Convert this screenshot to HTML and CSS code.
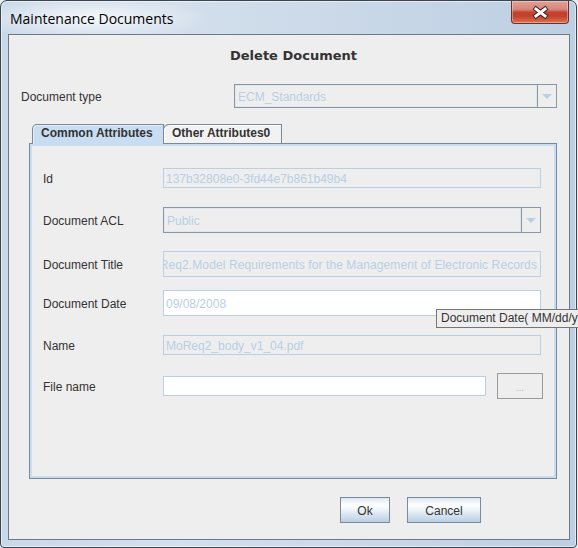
FILE: index.html
```html
<!DOCTYPE html>
<html>
<head>
<meta charset="utf-8">
<title>Maintenance Documents</title>
<link rel="stylesheet" href="styles.css">
</head>
<body>
<div class="window">
  <div class="titlebar">
    <span class="title">Maintenance Documents</span>
    <div class="close">
      <svg width="57" height="23" viewBox="0 0 57 23">
        <path d="M22 6.5 L35 16.5 M35 6.5 L22 16.5" stroke="#4b2b28" stroke-width="5" fill="none"/>
        <path d="M22.8 7.2 L34.2 15.8 M34.2 7.2 L22.8 15.8" stroke="#ffffff" stroke-width="2.8" fill="none"/>
      </svg>
    </div>
  </div>
  <div class="client">
    <h1 class="heading">Delete Document</h1>
    <div class="type-row">
      <span class="label">Document type</span>
      <div class="combo">
        <span class="combo-text">ECM_Standards</span>
        <span class="combo-arrow"><svg width="10" height="5" viewBox="0 0 10 5"><path d="M0 0 H10 L5 5 Z" fill="#b8cfe5"/></svg></span>
      </div>
    </div>
    <div class="tabs">
      <div class="tab-strip">
        <div class="tab tab-selected">Common Attributes</div>
        <div class="tab tab-other">Other Attributes0</div>
      </div>
      <div class="tab-panel">
        <div class="form-row">
          <span class="label">Id</span>
          <div class="field">137b32808e0-3fd44e7b861b49b4</div>
        </div>
        <div class="form-row gap-19">
          <span class="label">Document ACL</span>
          <div class="combo combo-tall">
            <span class="combo-text">Public</span>
            <span class="combo-arrow"><svg width="10" height="5" viewBox="0 0 10 5"><path d="M0 0 H10 L5 5 Z" fill="#b8cfe5"/></svg></span>
          </div>
        </div>
        <div class="form-row gap-18">
          <span class="label">Document Title</span>
          <div class="field field-tall field-end"><span class="nowrap wide">MoReq2.Model Requirements for the Management of Electronic Records</span></div>
        </div>
        <div class="form-row gap-13">
          <span class="label">Document Date</span>
          <div class="field field-tall field-white">09/08/2008</div>
        </div>
        <div class="form-row gap-19">
          <span class="label">Name</span>
          <div class="field">MoReq2_body_v1_04.pdf</div>
        </div>
        <div class="form-row gap-18">
          <span class="label">File name</span>
          <div class="field field-white field-file"></div>
          <div class="browse">...</div>
        </div>
      </div>
    </div>
    <div class="buttons">
      <div class="btn btn-ok">Ok</div>
      <div class="btn btn-cancel">Cancel</div>
    </div>
  </div>
</div>
<div class="tooltip">Document Date( MM/dd/yyyy)</div>
</body>
</html>
```

FILE: styles.css
```css
* { box-sizing: border-box; }
html, body { margin: 0; padding: 0; }
body {
  position: relative;
  width: 578px;
  height: 548px;
  overflow: hidden;
  background: #e6ebf1;
  font-family: "Liberation Sans", Arial, sans-serif;
  font-size: 12px;
  color: #333333;
}
.window {
  position: relative;
  width: 577px;
  height: 548px;
  border: 1px solid #3a4552;
  border-radius: 7px 7px 4px 4px;
  background: linear-gradient(90deg, #c9d8e8 0%, #d3dfec 30%, #c7d6e7 70%, #bccfe3 100%);
  box-shadow: inset 0 0 0 1px rgba(255,255,255,0.55);
  display: flex;
  flex-direction: column;
  overflow: hidden;
}
.titlebar {
  position: relative;
  height: 33px;
  flex: none;
  background: radial-gradient(ellipse 120px 22px at 88px 17px, rgba(255,255,255,0.8), rgba(255,255,255,0));
}
.title {
  display: block;
  padding: 9px 0 0 9px;
  font-family: "Open Sans", "Noto Sans", sans-serif;
  font-size: 14px;
  line-height: 18px;
  color: #000;
}
.close {
  position: absolute;
  left: 510px;
  top: 0;
  width: 58px;
  height: 23px;
  border: 1px solid #6f2f26;
  border-top: none;
  border-radius: 0 0 4px 4px;
  background: linear-gradient(180deg, #e3a193 0%, #d7867a 38%, #c1402f 52%, #c4432c 70%, #dd7350 100%);
  box-shadow: inset 0 0 0 1px rgba(255,255,255,0.35);
}
.close svg { display: block; }
.client {
  margin: 0 6px 7px 7px;
  height: 506px;
  flex: none;
  border: 1px solid #6b7989;
  background: #eeeeee;
  display: flex;
  flex-direction: column;
}
.heading {
  margin: 0;
  padding: 13px 0 0 9px;
  font-family: "DejaVu Sans", Verdana, sans-serif;
  font-weight: bold;
  font-size: 13px;
  line-height: 16px;
  text-align: center;
  color: #333333;
}
.label { color: #333333; white-space: nowrap; padding-top: 2px; }
.type-row {
  margin-top: 20px;
  padding: 0 12px;
  display: grid;
  grid-template-columns: 213px 1fr;
  align-items: center;
}
.combo {
  height: 24px;
  border: 1px solid #8a96a2;
  display: flex;
  align-items: stretch;
  background: #eeeeee;
}
.combo-tall { height: 26px; }
.combo-text {
  flex: 1;
  display: flex;
  align-items: center;
  padding-left: 3px;
  padding-top: 1px;
  color: #b8cfe5;
  box-shadow: inset 0 0 0 1px #dfe6ee;
}
.combo-arrow {
  width: 19px;
  border-left: 1px solid #8a96a2;
  display: flex;
  align-items: center;
  justify-content: center;
}
.combo-arrow svg { display: block; }
.tabs {
  margin: 16px 12px 0 20px;
  display: flex;
  flex-direction: column;
}
.tab-strip {
  display: flex;
  align-items: flex-start;
  padding-left: 3px;
  height: 19px;
  position: relative;
  z-index: 1;
}
.tab {
  height: 19px;
  border: 1px solid #7a8a99;
  border-bottom: none;
  font-weight: bold;
  font-size: 12px;
  line-height: 17px;
  padding-left: 8px;
  white-space: nowrap;
  color: #333333;
}
.tab-selected {
  width: 132px;
  height: 20px;
  border-radius: 5px 0 0 0;
  background: #c8ddf2;
  box-shadow: inset 1px 1px 0 #e3eef9;
}
.tab-other {
  width: 118px;
  border-left: none;
  border-radius: 6px 0 0 0;
  background: #f2f2f2;
  padding-left: 8px;
  box-shadow: inset 1px 1px 0 #ffffff, -1px 0 0 0 #7a8a99;
}
.tab-panel {
  height: 336px;
  border: 1px solid #7a8a99;
  box-shadow: inset 0 0 0 2px #c8ddf2;
  background: #eeeeee;
  padding: 24px 15px 0 13px;
}
.form-row {
  display: flex;
  align-items: center;
}
.form-row > .label { width: 120px; flex: none; }
.form-row > .field, .form-row > .combo { flex: 1; min-width: 0; }
.gap-19 { margin-top: 19px; }
.gap-18 { margin-top: 18px; }
.gap-13 { margin-top: 13px; }
.field {
  height: 20px;
  border: 1px solid #b8cfe5;
  background: #eeeeee;
  color: #b8cfe5;
  padding: 1px 2px 0;
  display: flex;
  align-items: center;
  white-space: nowrap;
  overflow: hidden;
}
.field-tall { height: 26px; }
.field-white { background: #ffffff; }
.field-end { justify-content: flex-end; padding-right: 3px; }
.nowrap { flex: none; white-space: nowrap; }
.wide { letter-spacing: 0.1px; }
.form-row > .field-file { flex: none; width: 323px; }
.browse {
  flex: none;
  width: 46px;
  height: 26px;
  margin-left: 11px;
  border: 1px solid #9a9a9a;
  background: #eeeeee;
  color: #a8a8a8;
  font-size: 9px;
  display: flex;
  align-items: center;
  justify-content: center;
  padding-top: 3px;
}
.buttons {
  margin-top: 18px;
  padding-right: 88px;
  display: flex;
  justify-content: flex-end;
  gap: 17px;
}
.btn {
  height: 26px;
  border: 1px solid #7a8a99;
  background: linear-gradient(180deg, #dde8f3 0%, #ffffff 30%, #f2f6fa 45%, #b8cfe5 100%);
  display: flex;
  align-items: center;
  justify-content: center;
  padding-top: 1px;
  color: #333333;
}
.btn-ok { width: 50px; }
.btn-cancel { width: 74px; }
.tooltip {
  position: absolute;
  left: 436px;
  top: 309px;
  width: 170px;
  height: 19px;
  border: 1px solid #767676;
  background: #eeeeee;
  color: #333333;
  padding-left: 4px;
  line-height: 17px;
  white-space: nowrap;
}
```
